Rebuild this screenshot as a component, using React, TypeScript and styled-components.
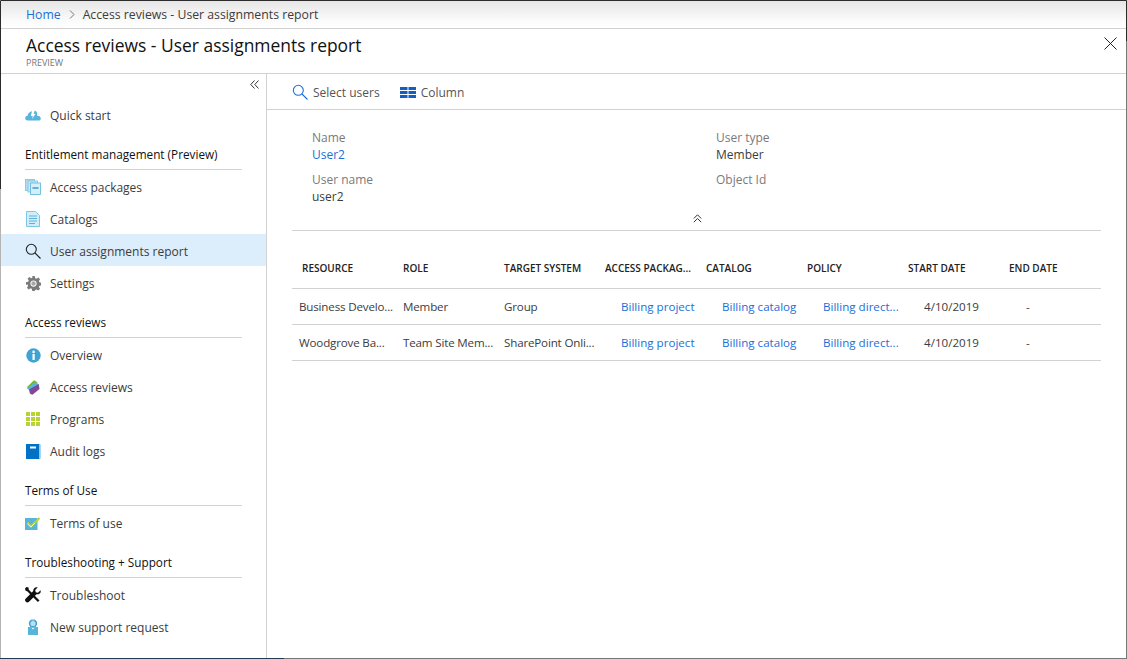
import React from 'react';
import styled, { createGlobalStyle } from 'styled-components';

const Global = createGlobalStyle`
  html, body { margin: 0; padding: 0; background: #fff; }
  body { font-family: "Open Sans", "Noto Sans", sans-serif; font-size: 12px; color: #3c3c3c; }
  * { box-sizing: border-box; }
`;

const Frame = styled.div`
  position: relative; width: 1127px; height: 659px; display: flex; flex-direction: column;
  border-top: 1px solid #2b2b2b; border-left: 1px solid #b4b4b4; border-right: 1px solid #777; border-bottom: 1px solid #777;
  &::before { content: ''; position: absolute; left: -1px; top: 0; width: 1px; height: 188px; background: #2b2b2b; }
  &::after { content: ''; position: absolute; right: -1px; top: 0; width: 1px; height: 40px; background: #2b2b2b; }
`;
const BottomEdge = styled.div`position: absolute; left: -1px; bottom: -1px; width: 284px; height: 1px; background: #1f3b52;`;
const Crumbs = styled.nav`
  height: 28px; flex: none; display: flex; align-items: center; padding-left: 25px; gap: 8px; font-size: 12.25px;
  background: linear-gradient(#e6e6e6, #fafafa 70%, #fff); border-bottom: 1px solid #d2d2d2;
`;
const CrumbLink = styled.a`color: #1a6fd8;`;
const Title = styled.header`
  height: 45px; flex: none; position: relative; padding: 5px 0 0 25px; border-bottom: 1px solid #d2d2d2;
`;
const H1 = styled.h1`margin: 0; font-size: 17.45px; line-height: 22px; font-weight: 500; color: #111;`;
const Sub = styled.div`font-size: 9px; line-height: 11px; color: #777; margin-top: 1px;`;
const Close = styled.svg`position: absolute; right: 9px; top: 8px;`;
const Body = styled.div`flex: 1; display: flex; min-height: 0;`;
const Side = styled.aside`width: 266px; flex: none; border-right: 1px solid #d2d2d2; display: flex; flex-direction: column;`;
const Collapse = styled.div`height: 24px; padding: 6px 7px 0 0; display: flex; justify-content: flex-end; align-items: flex-start;`;
const Row = styled.div<{ $active?: boolean }>`
  height: 32px; display: flex; align-items: center; padding: 2px 0 0 24px; gap: 9px;
  background: ${p => (p.$active ? '#dcedfb' : 'transparent')};
`;
const IconBox = styled.span`width: 16px; height: 16px; flex: none; display: flex; align-items: center; justify-content: center;`;
const SectionHead = styled.div`
  height: 39px; margin: 1px 24px 0 24px; display: flex; align-items: flex-end; padding-bottom: 7px;
  border-bottom: 1px solid #d2d2d2; font-weight: 500; color: #111; font-size: 11.75px;
`;
const Main = styled.main`flex: 1; min-width: 0; display: flex; flex-direction: column;`;
const Toolbar = styled.div`height: 36px; flex: none; display: flex; align-items: center; padding: 1px 0 0 25px; border-bottom: 1px solid #d2d2d2;`;
const ToolButton = styled.div`display: flex; align-items: center; gap: 5px; margin-right: 20px; color: #555;`;
const Details = styled.section`
  display: grid; grid-template-columns: 404px 1fr; padding: 19px 0 0 45px; margin-right: 24px;
`;
const Field = styled.div`height: 42px; line-height: 17px;`;
const Label = styled.div`color: #7a7a7a;`;
const Value = styled.div`color: #3c3c3c;`;
const ValueLink = styled.div`color: #1a6fd8;`;
const Fold = styled.div`height: 20px; margin: -2px 25px 0 25px; display: flex; justify-content: center; align-items: center; padding: 0 0 4px 1px;
  border-bottom: 1px solid #d2d2d2;`;
const Table = styled.div`margin: 0 25px; `;
const Grid = styled.div`display: grid; grid-template-columns: repeat(8, 101px);`;
const HeadRow = styled(Grid)`height: 58px; align-items: center; padding-top: 17px; border-bottom: 1px solid #d2d2d2;`;
const HeadCell = styled.div`padding-left: 10px; font-size: 10px; font-weight: 600; color: #222; white-space: nowrap;`;
const DataRow = styled(Grid)`height: 36px; align-items: center; border-bottom: 1px solid #d2d2d2; font-size: 11.6px;`;
const Cell = styled.div<{ $pad: number; $link?: boolean; $tight?: boolean }>`
  padding-left: ${p => p.$pad}px; white-space: nowrap; min-width: 0; color: ${p => (p.$link ? '#1a6fd8' : '#3c3c3c')};
  letter-spacing: ${p => (p.$tight ? '-0.17px' : 'normal')};
`;

const Cloud = () => (
  <svg width="16" height="11" viewBox="0 0 16 11"><path d="M2.800 10.500C1.200 10.500.2 9.500.2 8.200c0-1.300 1-2.300 2.300-2.400C3 3.400 4.800 1.600 7 1.300L5.800 6h2L7 9l3.500-5H8.700l1-3.400c1.300.4 2.100 1.400 2.400 2.600.1.900.1 1.600 0 2.500 2-.3 3.700.9 3.700 2.700 0 1.300-1 2.100-2.400 2.100Z" fill="#59b4d9"/></svg>
);
const Packages = () => (
  <svg width="16" height="16" viewBox="0 0 16 16"><rect x=".5" y=".5" width="9" height="11" fill="#b3dcf0" stroke="#7cc0e0" strokeWidth=".8"/><rect x="3" y="2" width="9.500" height="11" fill="#c9e7f5" stroke="#7cc0e0" strokeWidth=".8"/><rect x="5.500" y="4" width="10" height="11.500" fill="#d6eef8" stroke="#59b4d9" strokeWidth=".8"/><rect x="7.500" y="8" width="6" height="2" fill="#59b4d9"/></svg>
);
const Doc = () => (
  <svg width="14" height="16" viewBox="0 0 14 16"><path d="M.5.500h9l4 4v11H.500Z" fill="#d4ecf8" stroke="#7cc6e6"/><path d="M3 5h8M3 7.500h8M3 10h8M3 12.500h6" stroke="#59b4d9"/></svg>
);
const Mag = ({ color, size = 16 }: { color: string; size?: number }) => (
  <svg width={size} height={size} viewBox="0 0 16 16" fill="none" stroke={color} strokeWidth="1.100"><circle cx="6.300" cy="6.300" r="5"/><path d="m10 10 5.500 5.500"/></svg>
);
const Gear = () => (
  <svg width="15" height="15" viewBox="0 0 24 24"><path fill="#7a7a7a" fillRule="evenodd" d="M10 0h4l.7 3.400 2 .8L19.700 2.300l2.800 2.800-1.900 3 .9 2 3.500.7v4l-3.500.7-.9 2 1.900 3-2.800 2.800-3-1.900-2 .8L14 24h-4l-.7-3.700-2-.8-3 1.900-2.800-2.800 1.900-3-.9-2L0 14v-4l3.500-.7.900-2-1.900-3L5.300 1.500l3 1.900 2-.8ZM12 7a5 5 0 1 0 0 10 5 5 0 0 0 0-10Z"/><circle cx="12" cy="12" r="3.500" fill="#a8a8a8"/></svg>
);
const Info = () => (
  <svg width="15" height="15" viewBox="0 0 15 15"><circle cx="7.500" cy="7.500" r="7.200" fill="#3fa4d4"/><rect x="6.500" y="6" width="2.200" height="6" fill="#fff"/><circle cx="7.600" cy="3.900" r="1.300" fill="#fff"/></svg>
);
const Reviews = () => (
  <svg width="14" height="15" viewBox="0 0 14 15"><path d="M1 7 8 .3l3.500 2L3 9Z" fill="#7fba00"/><path d="M.8 8 9.500 1.800l3.300 2.700L4 11Z" fill="#59b4d9"/><path d="M3 9.500 12.800 4l.7 5L6.500 14.700 4 13.700Z" fill="#804998"/></svg>
);
const Programs = () => (
  <svg width="14" height="14" viewBox="0 0 14 14" fill="#b8d432">
    {[0, 5, 10].flatMap(y => [0, 5, 10].map(x => <rect key={`${x}-${y}`} x={x} y={y} width="4" height="4" />))}
  </svg>
);
const Book = () => (
  <svg width="15" height="15" viewBox="0 0 15 15"><rect width="13.500" height="15" fill="#0072c6"/><rect x="13.500" y=".5" width="1.500" height="14" fill="#a9d5ef"/><rect x="4" y="2.500" width="6" height="2" fill="#fff"/></svg>
);
const Terms = () => (
  <svg width="16" height="13" viewBox="0 0 16 13"><rect y="1" width="12.500" height="12" fill="#59b4d9"/><path d="m2.500 5.500 3.500 4L14.500 1" fill="none" stroke="#b8d432" strokeWidth="2"/><path d="m2.500 7 3.500 3 4-4" fill="none" stroke="#e8f4fa" strokeWidth="1"/></svg>
);
const Tools = () => (
  <svg width="16" height="16" viewBox="0 0 16 16" fill="#111"><path d="m3.800 2.700 10.700 10.700-1.600 1.600L2.200 4.300.6 3.700 0 1.500 1.500 0l2 .6Z"/><path d="M15.500 3.300 13 5.800l-2.300-.5-.5-2.300L12.700.5C10.500-.4 8 1.200 8.300 4L.8 11.500a2.200 2.200 0 0 0 3.200 3.200L11.500 7.300c2.600.5 5-1.700 4-4Z"/></svg>
);
const Support = () => (
  <svg width="12" height="16" viewBox="0 0 12 16"><path d="M1 8h3l2 2.500L8 8h3v8H1Z" fill="#59b4d9"/><circle cx="6" cy="4.500" r="3.400" fill="#b6e0f3" stroke="#3fa4d4" strokeWidth="1.600"/><path d="M4.500 0h3v1.500h-3z" fill="#a9d5ef"/></svg>
);

const groups: { head?: string; items: { label: string; icon: React.ReactNode; active?: boolean }[] }[] = [
  { items: [{ label: 'Quick start', icon: <Cloud /> }] },
  { head: 'Entitlement management (Preview)', items: [
    { label: 'Access packages', icon: <Packages /> },
    { label: 'Catalogs', icon: <Doc /> },
    { label: 'User assignments report', icon: <Mag color="#222" />, active: true },
    { label: 'Settings', icon: <Gear /> },
  ] },
  { head: 'Access reviews', items: [
    { label: 'Overview', icon: <Info /> },
    { label: 'Access reviews', icon: <Reviews /> },
    { label: 'Programs', icon: <Programs /> },
    { label: 'Audit logs', icon: <Book /> },
  ] },
  { head: 'Terms of Use', items: [{ label: 'Terms of use', icon: <Terms /> }] },
  { head: 'Troubleshooting + Support', items: [
    { label: 'Troubleshoot', icon: <Tools /> },
    { label: 'New support request', icon: <Support /> },
  ] },
];

const heads = ['RESOURCE', 'ROLE', 'TARGET SYSTEM', 'ACCESS PACKAG...', 'CATALOG', 'POLICY', 'START DATE', 'END DATE'];
const rows = [
  ['Business Develo...', 'Member', 'Group', 'Billing project', 'Billing catalog', 'Billing direct...', '4/10/2019', '-'],
  ['Woodgrove Ba...', 'Team Site Mem...', 'SharePoint Onli...', 'Billing project', 'Billing catalog', 'Billing direct...', '4/10/2019', '-'],
];
const pads = [7, 10, 10, 26, 26, 26, 26, 27];

export default function App() {
  return (
    <Frame>
      <Global />
      <Crumbs>
        <CrumbLink>Home</CrumbLink>
        <svg width="6" height="9" viewBox="0 0 6 9" fill="none" stroke="#777"><path d="m1 .5 4 4-4 4" /></svg>
        <span>Access reviews - User assignments report</span>
      </Crumbs>
      <Title>
        <H1>Access reviews - User assignments report</H1>
        <Sub>PREVIEW</Sub>
        <Close width="13" height="13" viewBox="0 0 13 13" stroke="#222"><path d="m.5.500 12 12M12.500.500l-12 12" /></Close>
      </Title>
      <Body>
        <Side>
          <Collapse>
            <svg width="9" height="9" viewBox="0 0 9 9" fill="none" stroke="#333"><path d="M4.500.500.800 4.500l3.700 4M8.500.500 4.800 4.500l3.700 4" /></svg>
          </Collapse>
          {groups.map((g, i) => (
            <React.Fragment key={i}>
              {g.head && <SectionHead>{g.head}</SectionHead>}
              {g.items.map(it => (
                <Row key={it.label} $active={it.active}>
                  <IconBox>{it.icon}</IconBox>
                  <span>{it.label}</span>
                </Row>
              ))}
            </React.Fragment>
          ))}
        </Side>
        <Main>
          <Toolbar>
            <ToolButton><Mag color="#1a6fd8" /><span>Select users</span></ToolButton>
            <ToolButton>
              <svg width="16" height="11" viewBox="0 0 16 11" fill="#0f5fc4"><rect width="7.500" height="3"/><rect x="8.500" width="7.500" height="3"/><rect y="4" width="7.500" height="3"/><rect x="8.500" y="4" width="7.500" height="3"/><rect y="8" width="7.500" height="3"/><rect x="8.500" y="8" width="7.500" height="3"/></svg>
              <span>Column</span>
            </ToolButton>
          </Toolbar>
          <Details>
            <Field><Label>Name</Label><ValueLink>User2</ValueLink></Field>
            <Field><Label>User type</Label><Value>Member</Value></Field>
            <Field><Label>User name</Label><Value>user2</Value></Field>
            <Field><Label>Object Id</Label></Field>
          </Details>
          <Fold>
            <svg width="9" height="9" viewBox="0 0 9 9" fill="none" stroke="#333"><path d="m.8 4.500 3.700-3.700 3.700 3.700M.8 8.200l3.700-3.700 3.700 3.700" /></svg>
          </Fold>
          <Table>
            <HeadRow>{heads.map(h => <HeadCell key={h}>{h}</HeadCell>)}</HeadRow>
            {rows.map((r, i) => (
              <DataRow key={i}>
                {r.map((c, j) => <Cell key={j} $pad={pads[j]} $link={j >= 3 && j <= 5} $tight={j < 3}>{c}</Cell>)}
              </DataRow>
            ))}
          </Table>
        </Main>
      </Body>
      <BottomEdge />
    </Frame>
  );
}
